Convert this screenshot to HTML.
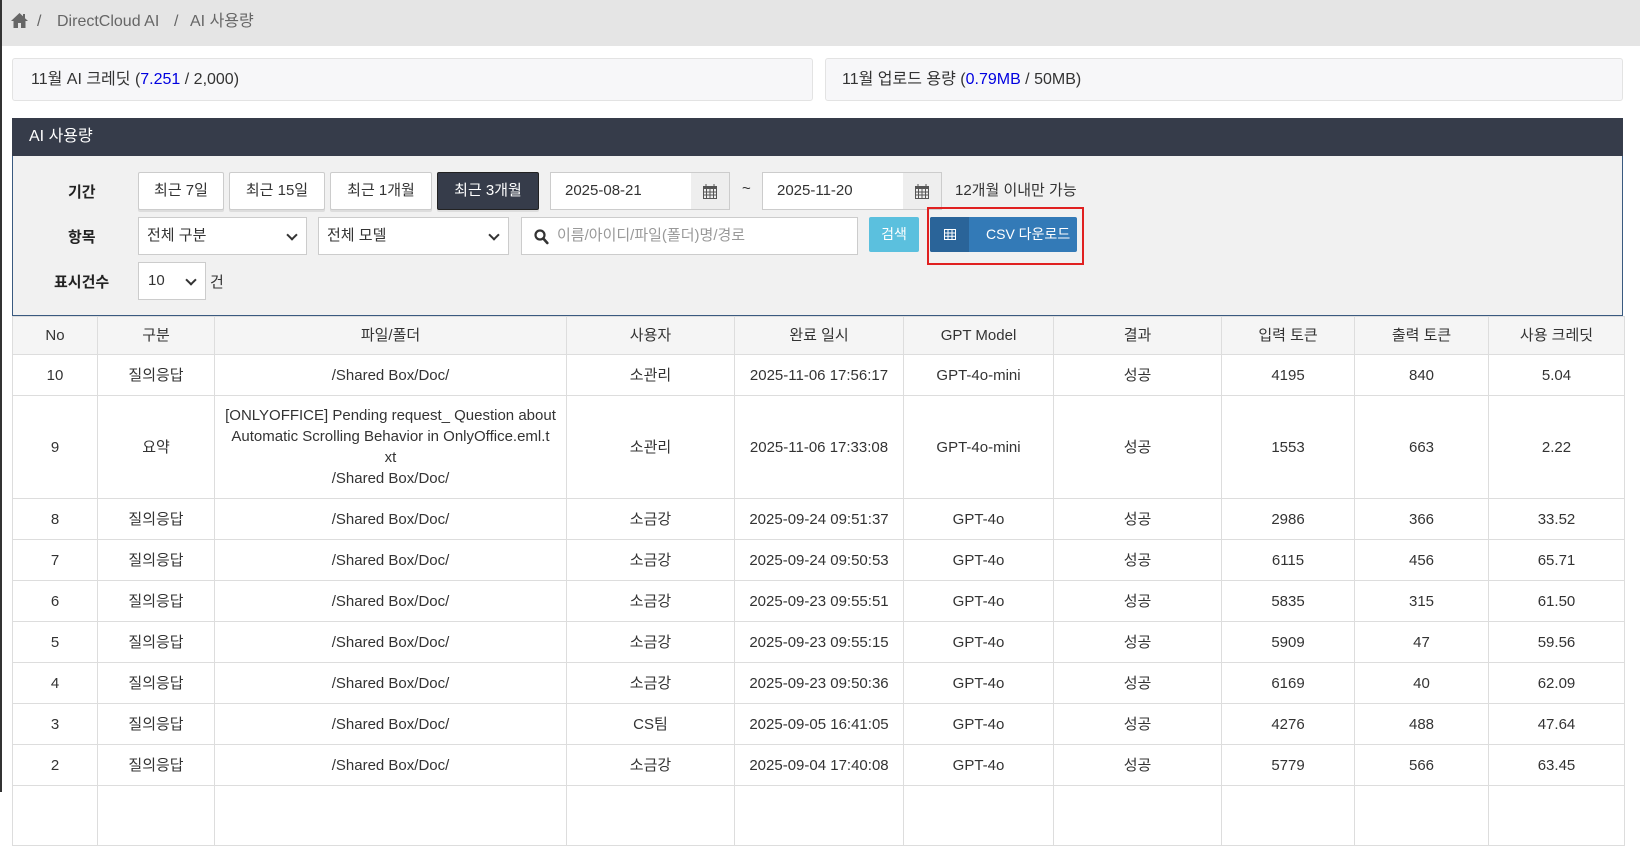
<!DOCTYPE html>
<html><head><meta charset="utf-8"><style>
*{box-sizing:border-box;margin:0;padding:0}
body{width:1640px;height:792px;overflow:hidden;background:#fff;font-family:"Liberation Sans","Noto Sans CJK KR",sans-serif;font-size:15px;color:#333;position:relative}
.abs{position:absolute}
.top{left:0;top:0;width:1640px;height:46px;background:#e5e5e5;color:#666;font-size:16px}
.top span{line-height:22px;top:11px}
.strip{left:0;top:0;width:2px;height:792px;background:#333}
.card{top:58px;height:43px;background:#f7f7f9;border:1px solid #e3e3e3;border-radius:3px;font-size:16px;line-height:41px;padding-left:18px}
.blue{color:#0000e0}
.hdr{left:12px;top:118px;width:1611px;height:38px;background:#363c4a;color:#fff;font-size:16px;line-height:38px;padding-left:17px}
.panel{left:12px;top:156px;width:1611px;height:160px;background:#f1f1f1;border:1px solid #3a5a80;border-top:none}
.lbl{font-weight:bold;font-size:15px;color:#222}
.btn{height:38px;background:#fff;border:1px solid #ccc;border-radius:2px;text-align:center;line-height:36px;font-size:15px;box-shadow:0 2px 0 #ddd}
.inp{height:38px;background:#fff;border:1px solid #ccc;font-size:15px;line-height:36px;padding-left:12px}
.addon{height:38px;background:#eee;border:1px solid #ccc;border-left:none}
.sel::after{content:"";position:absolute;right:10px;top:13px;width:6px;height:6px;border-right:2px solid #333;border-bottom:2px solid #333;transform:rotate(45deg)}
table{position:absolute;left:12px;top:316px;width:1612px;border-collapse:collapse;table-layout:fixed}
td,th{border:1px solid #ddd;text-align:center;font-weight:normal;font-size:15px;line-height:21px}
th{background:#f5f5f5;height:38px}
td{height:41px}
</style></head><body>
<div class="abs top">
 <svg class="abs" style="left:11px;top:13px" width="17" height="15" viewBox="0 0 17 15"><path d="M8.5 0L0 8h2.5v7h4.5v-5h3v5h4.5V8H17L14 5.2V1h-2v2.3z" fill="#666"/></svg>
 <span class="abs" style="left:37px">/</span>
 <span class="abs" style="left:57px">DirectCloud AI</span>
 <span class="abs" style="left:174px">/</span>
 <span class="abs" style="left:190px">AI 사용량</span>
</div>
<div class="abs strip"></div>
<div class="abs card" style="left:12px;width:801px">11월 AI 크레딧 (<span class="blue">7.251</span> / 2,000)</div>
<div class="abs card" style="left:825px;width:798px;padding-left:16px">11월 업로드 용량 (<span class="blue">0.79MB</span> / 50MB)</div>
<div class="abs hdr">AI 사용량</div>
<div class="abs panel"></div>
<span class="abs lbl" style="left:68px;top:181px">기간</span>
<span class="abs lbl" style="left:68px;top:226px">항목</span>
<span class="abs lbl" style="left:54px;top:271px">표시건수</span>
<div class="abs btn" style="left:138px;top:172px;width:86px">최근 7일</div>
<div class="abs btn" style="left:229px;top:172px;width:96px">최근 15일</div>
<div class="abs btn" style="left:330px;top:172px;width:102px">최근 1개월</div>
<div class="abs btn" style="left:437px;top:172px;width:102px;background:#363c4a;color:#fff;border-color:#222">최근 3개월</div>
<div class="abs inp" style="left:550px;top:172px;width:142px;padding-left:14px">2025-08-21</div>
<div class="abs addon" style="left:691px;top:172px;width:39px"><svg class="abs" style="left:12px;top:11px" width="14" height="15" viewBox="0 0 14 15"><rect x="0.5" y="2.5" width="13" height="12" fill="none" stroke="#555"/><rect x="0" y="2" width="14" height="3" fill="#555"/><path d="M3 0v4M11 0v4M0 8h14M0 11h14M3.5 5v10M7 5v10M10.5 5v10" stroke="#555"/></svg></div>
<span class="abs" style="left:742px;top:180px">~</span>
<div class="abs inp" style="left:762px;top:172px;width:142px;padding-left:14px">2025-11-20</div>
<div class="abs addon" style="left:903px;top:172px;width:39px"><svg class="abs" style="left:12px;top:11px" width="14" height="15" viewBox="0 0 14 15"><rect x="0.5" y="2.5" width="13" height="12" fill="none" stroke="#555"/><rect x="0" y="2" width="14" height="3" fill="#555"/><path d="M3 0v4M11 0v4M0 8h14M0 11h14M3.5 5v10M7 5v10M10.5 5v10" stroke="#555"/></svg></div>
<span class="abs" style="left:955px;top:179px">12개월 이내만 가능</span>
<div class="abs inp sel" style="left:138px;top:217px;width:169px;padding-left:8px">전체 구분</div>
<div class="abs inp sel" style="left:318px;top:217px;width:191px;padding-left:8px">전체 모델</div>
<div class="abs inp" style="left:521px;top:217px;width:337px;color:#999;padding-left:35px">이름/아이디/파일(폴더)명/경로
 <svg class="abs" style="left:12px;top:11px" width="15" height="16" viewBox="0 0 15 16"><circle cx="6" cy="6" r="4.5" fill="none" stroke="#333" stroke-width="2.2"/><path d="M9.3 9.5l4 4.5" stroke="#333" stroke-width="2.6" stroke-linecap="round"/></svg></div>
<div class="abs" style="left:869px;top:217px;width:50px;height:35px;background:#5bc0de;color:#fff;border-radius:2px;text-align:center;line-height:35px;font-size:14px">검색</div>
<div class="abs" style="left:927px;top:207px;width:157px;height:58px;border:2px solid #e02020"></div>
<div class="abs" style="left:930px;top:217px;width:147px;height:35px;background:#337ab7;border-radius:2px;color:#fff;font-size:14px;line-height:35px">
 <div class="abs" style="left:0;top:0;width:39px;height:35px;background:#2a6499;border-radius:2px 0 0 2px"></div>
 <svg class="abs" style="left:14px;top:12px" width="12" height="11" viewBox="0 0 12 11"><path d="M0.5 0.5h11v10h-11zM0.5 4h11M0.5 7.3h11M4 0.5v10M8 0.5v10" fill="none" stroke="#fff"/></svg>
 <span class="abs" style="left:56px;top:0">CSV 다운로드</span></div>
<div class="abs inp sel" style="left:138px;top:262px;width:68px;padding-left:9px">10</div>
<span class="abs" style="left:210px;top:271px">건</span>
<table>
<colgroup><col style="width:85px"><col style="width:117px"><col style="width:352px"><col style="width:168px"><col style="width:169px"><col style="width:150px"><col style="width:168px"><col style="width:133px"><col style="width:134px"><col style="width:136px"></colgroup>
<tr><th>No</th><th>구분</th><th>파일/폴더</th><th>사용자</th><th>완료 일시</th><th>GPT Model</th><th>결과</th><th>입력 토큰</th><th>출력 토큰</th><th>사용 크레딧</th></tr>
<tr><td>10</td><td>질의응답</td><td>/Shared Box/Doc/</td><td>소관리</td><td>2025-11-06 17:56:17</td><td>GPT-4o-mini</td><td>성공</td><td>4195</td><td>840</td><td>5.04</td></tr>
<tr><td style="height:103px">9</td><td>요약</td><td>[ONLYOFFICE] Pending request_ Question about Automatic Scrolling Behavior in OnlyOffice.eml.t<br>xt<br>/Shared Box/Doc/</td><td>소관리</td><td>2025-11-06 17:33:08</td><td>GPT-4o-mini</td><td>성공</td><td>1553</td><td>663</td><td>2.22</td></tr>
<tr><td style="height:40px">8</td><td>질의응답</td><td>/Shared Box/Doc/</td><td>소금강</td><td>2025-09-24 09:51:37</td><td>GPT-4o</td><td>성공</td><td>2986</td><td>366</td><td>33.52</td></tr>
<tr><td>7</td><td>질의응답</td><td>/Shared Box/Doc/</td><td>소금강</td><td>2025-09-24 09:50:53</td><td>GPT-4o</td><td>성공</td><td>6115</td><td>456</td><td>65.71</td></tr>
<tr><td>6</td><td>질의응답</td><td>/Shared Box/Doc/</td><td>소금강</td><td>2025-09-23 09:55:51</td><td>GPT-4o</td><td>성공</td><td>5835</td><td>315</td><td>61.50</td></tr>
<tr><td>5</td><td>질의응답</td><td>/Shared Box/Doc/</td><td>소금강</td><td>2025-09-23 09:55:15</td><td>GPT-4o</td><td>성공</td><td>5909</td><td>47</td><td>59.56</td></tr>
<tr><td>4</td><td>질의응답</td><td>/Shared Box/Doc/</td><td>소금강</td><td>2025-09-23 09:50:36</td><td>GPT-4o</td><td>성공</td><td>6169</td><td>40</td><td>62.09</td></tr>
<tr><td>3</td><td>질의응답</td><td>/Shared Box/Doc/</td><td>CS팀</td><td>2025-09-05 16:41:05</td><td>GPT-4o</td><td>성공</td><td>4276</td><td>488</td><td>47.64</td></tr>
<tr><td style="height:40px">2</td><td>질의응답</td><td>/Shared Box/Doc/</td><td>소금강</td><td>2025-09-04 17:40:08</td><td>GPT-4o</td><td>성공</td><td>5779</td><td>566</td><td>63.45</td></tr>
<tr><td style="height:60px"></td><td></td><td></td><td></td><td></td><td></td><td></td><td></td><td></td><td></td></tr>
</table>
</body></html>
